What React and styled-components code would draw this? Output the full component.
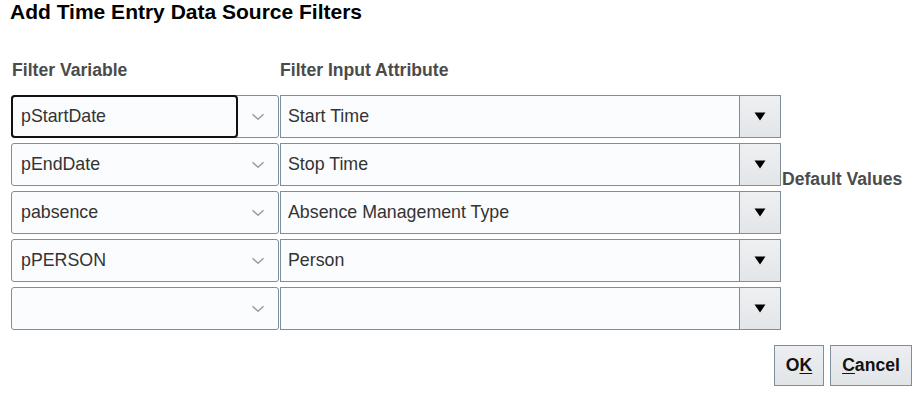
import React from "react";
import styled, { createGlobalStyle } from "styled-components";

const GlobalStyle = createGlobalStyle`
  body {
    margin: 0;
    background: #ffffff;
    font-family: "Liberation Sans", Arial, sans-serif;
  }
`;

const rows = [
  { variable: "pStartDate", attribute: "Start Time", focused: true },
  { variable: "pEndDate", attribute: "Stop Time" },
  { variable: "pabsence", attribute: "Absence Management Type" },
  { variable: "pPERSON", attribute: "Person" },
  { variable: "", attribute: "" },
];

const Dialog = styled.div`
  width: 924px;
  height: 393px;
  box-sizing: border-box;
  padding: 0 12px 0 11px;
  display: flex;
  flex-direction: column;
`;

const Title = styled.h1`
  margin: 0 0 36px -1px;
  font-size: 21px;
  line-height: 24px;
  font-weight: 700;
  color: #000;
`;

const Table = styled.div`
  display: grid;
  grid-template-columns: 268px 502px auto;
  grid-template-rows: 30px repeat(5, 43px);
  row-gap: 5px;
`;

const HeaderLabel = styled.div`
  font-size: 17.6px;
  line-height: 20px;
  font-weight: 700;
  color: #4b4b4b;
  padding-left: 1px;
`;

const SideLabel = styled(HeaderLabel)`
  grid-column: 3;
  grid-row: 2 / 4;
  align-self: end;
  line-height: 17px;
  margin-bottom: -2px;
`;

const Combo = styled.div`
  display: flex;
  align-items: stretch;
  box-sizing: border-box;
  height: 43px;
  border: 1px solid #7e8e9b;
  border-radius: 3px;
  background: #fbfcfe;
`;

const ComboInput = styled.div`
  flex: 1;
  display: flex;
  align-items: center;
  box-sizing: border-box;
  margin: -1px 0 -1px -1px;
  padding-left: 8px;
  border: 2px solid ${(p) => (p.$focused ? "#111" : "transparent")};
  border-radius: 4px;
  font-size: 17.8px;
  color: #333;
`;

const ChevronBox = styled.div`
  width: 40px;
  display: flex;
  align-items: center;
  justify-content: center;
`;

const Select = styled.div`
  display: flex;
  height: 43px;
  margin-left: 1px;
`;

const SelectValue = styled.div`
  flex: 1;
  display: flex;
  align-items: center;
  box-sizing: border-box;
  padding-left: 7px;
  border: 1px solid #7e8e9b;
  border-right: none;
  background: #fbfcfe;
  font-size: 17.8px;
  color: #333;
`;

const SelectButton = styled.div`
  width: 42px;
  box-sizing: border-box;
  border: 1px solid #7e8e9b;
  background: linear-gradient(#eef0f2, #e3e6e9);
  display: flex;
  align-items: center;
  justify-content: center;
`;

const Footer = styled.div`
  display: flex;
  justify-content: flex-end;
  gap: 6px;
  margin-top: 15px;
`;

const Button = styled.button`
  height: 41px;
  width: ${(p) => p.$width}px;
  box-sizing: border-box;
  border: 1px solid #7e8e9b;
  border-radius: 0;
  background: linear-gradient(#eceef1, #e2e5e8);
  font-family: "Liberation Sans", Arial, sans-serif;
  font-size: 17.6px;
  font-weight: 700;
  color: #111;
  padding: 0;
  u {
    text-underline-offset: 2px;
  }
`;

const Chevron = () => (
  <svg width="14" height="8" viewBox="0 0 14 8">
    <path d="M1.5 1.2 L7 6.3 L12.5 1.2" fill="none" stroke="#9c9c9c" strokeWidth="1.5" />
  </svg>
);

const Triangle = () => (
  <svg width="12" height="9" viewBox="0 0 12 9">
    <path d="M0.5 0.5 H11.5 L6 8.5 Z" fill="#000" />
  </svg>
);

export default function App() {
  return (
    <>
      <GlobalStyle />
      <Dialog>
        <Title>Add Time Entry Data Source Filters</Title>
        <Table>
          <HeaderLabel>Filter Variable</HeaderLabel>
          <HeaderLabel>Filter Input Attribute</HeaderLabel>
          <SideLabel>Default Values</SideLabel>
          {rows.map((r, i) => (
            <React.Fragment key={i}>
              <Combo style={{ gridColumn: 1, gridRow: i + 2 }}>
                <ComboInput $focused={r.focused}>{r.variable}</ComboInput>
                <ChevronBox>
                  <Chevron />
                </ChevronBox>
              </Combo>
              <Select style={{ gridColumn: 2, gridRow: i + 2 }}>
                <SelectValue>{r.attribute}</SelectValue>
                <SelectButton>
                  <Triangle />
                </SelectButton>
              </Select>
            </React.Fragment>
          ))}
        </Table>
        <Footer>
          <Button $width={50}>
            O<u>K</u>
          </Button>
          <Button $width={82}>
            <u>C</u>ancel
          </Button>
        </Footer>
      </Dialog>
    </>
  );
}
